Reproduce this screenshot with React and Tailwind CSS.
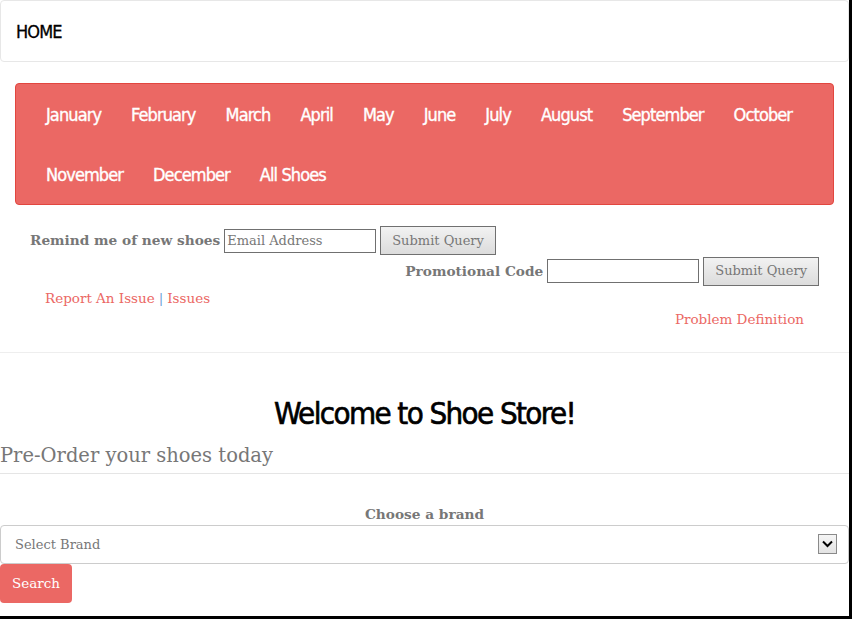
import React from "react";

const months = [
  ["January", "February", "March", "April", "May", "June", "July", "August", "September", "October"],
  ["November", "December", "All Shoes"],
];

const narrow = { fontFamily: '"Liberation Sans Narrow", "DejaVu Sans Condensed", "Arial Narrow", sans-serif' };
const serif = { fontFamily: '"DejaVu Serif", "Liberation Serif", Georgia, serif' };

const SubmitButton = () => (
  <button className="h-[29px] px-[11px] border border-[#707070] bg-gradient-to-b from-[#f2f2f2] to-[#dcdcdc] text-[13px] text-[#777]">
    Submit Query
  </button>
);

const App = () => {
  return (
    <div className="w-[852px] h-[619px] bg-black">
      <div className="w-[849px] h-[616px] bg-white overflow-hidden" style={serif}>
        {/* Navbar */}
        <div className="h-[62px] border border-[#e7e7e7] rounded-[4px] flex items-center px-[15px]">
          <span
            className="text-[18px] tracking-[-0.9px] text-black [-webkit-text-stroke:0.3px_currentColor]"
            style={narrow}
          >
            HOME
          </span>
        </div>

        {/* Month menu */}
        <div
          className="mx-[15px] mt-[21px] border border-[#e2463f] rounded-[4px] bg-[#eb6864] px-[15px]"
          style={narrow}
        >
          {months.map((row, i) => (
            <div key={i} className="h-[60px] flex items-center">
              {row.map((m) => (
                <a
                  key={m}
                  className="px-[15px] text-[18px] tracking-[-0.9px] text-white [-webkit-text-stroke:0.35px_currentColor]"
                >
                  {m}
                </a>
              ))}
            </div>
          ))}
        </div>

        {/* Forms */}
        <div className="px-[30px]">
          <div className="mt-[21px] flex items-center gap-[4px] h-[29px]">
            <span className="font-bold text-[13.7px] text-[#777]">Remind me of new shoes</span>
            <input
              className="w-[152px] h-[24px] border border-[#707070] px-[2px] text-[13px] text-[#777] placeholder:text-[#777] outline-none"
              placeholder="Email Address"
            />
            <SubmitButton />
          </div>
          <div className="mt-[1px] flex items-center justify-end gap-[4px] h-[30px]">
            <span className="font-bold text-[13.7px] text-[#777]">Promotional Code</span>
            <input className="w-[152px] h-[24px] border border-[#707070] px-[2px] text-[13px] outline-none" />
            <SubmitButton />
          </div>
          <div className="mt-[2px] px-[15px] h-[20px] flex items-center text-[13.5px] text-[#eb6864]">
            <a>Report An Issue</a>
            <span className="text-[#6f9fd8] mx-[4px]">|</span>
            <a>Issues</a>
          </div>
          <div className="mt-[1px] px-[15px] h-[20px] flex items-center justify-end text-[13.5px] text-[#eb6864]">
            <a>Problem Definition</a>
          </div>
        </div>

        <hr className="mt-[23px] border-0 border-t border-[#eeeeee]" />

        {/* Welcome */}
        <h1
          className="mt-[40px] h-[40px] flex items-center justify-center text-[31px] tracking-[-1.6px] text-black [-webkit-text-stroke:0.6px_currentColor]"
          style={narrow}
        >
          Welcome to Shoe Store!
        </h1>
        <h2 className="mt-[10px] h-[26px] flex items-center text-[19.5px] text-[#777]">
          Pre-Order your shoes today
        </h2>
        <hr className="mt-[4px] border-0 border-t border-[#e5e5e5]" />

        {/* Brand select */}
        <div className="mt-[30px] h-[20px] flex items-center justify-center font-bold text-[13.7px] text-[#777]">
          Choose a brand
        </div>
        <div className="relative mt-[1px]">
          <select className="appearance-none w-full h-[39px] border border-[#cccccc] rounded-[4px] pl-[14px] text-[13px] text-[#777] bg-white outline-none">
            <option>Select Brand</option>
          </select>
          <div className="absolute right-[12px] top-[9px] w-[19px] h-[20px] border border-[#8a8a8a] bg-gradient-to-b from-[#f5f5f5] to-[#e3e3e3] flex items-center justify-center pointer-events-none">
            <svg width="11" height="8" viewBox="0 0 11 8">
              <path d="M1 1.5 L5.5 6 L10 1.5" fill="none" stroke="#000" strokeWidth="2" />
            </svg>
          </div>
        </div>
        <button className="h-[39px] px-[12px] rounded-[4px] bg-[#eb6864] text-white text-[13.5px]">
          Search
        </button>
      </div>
    </div>
  );
};

export default App;
